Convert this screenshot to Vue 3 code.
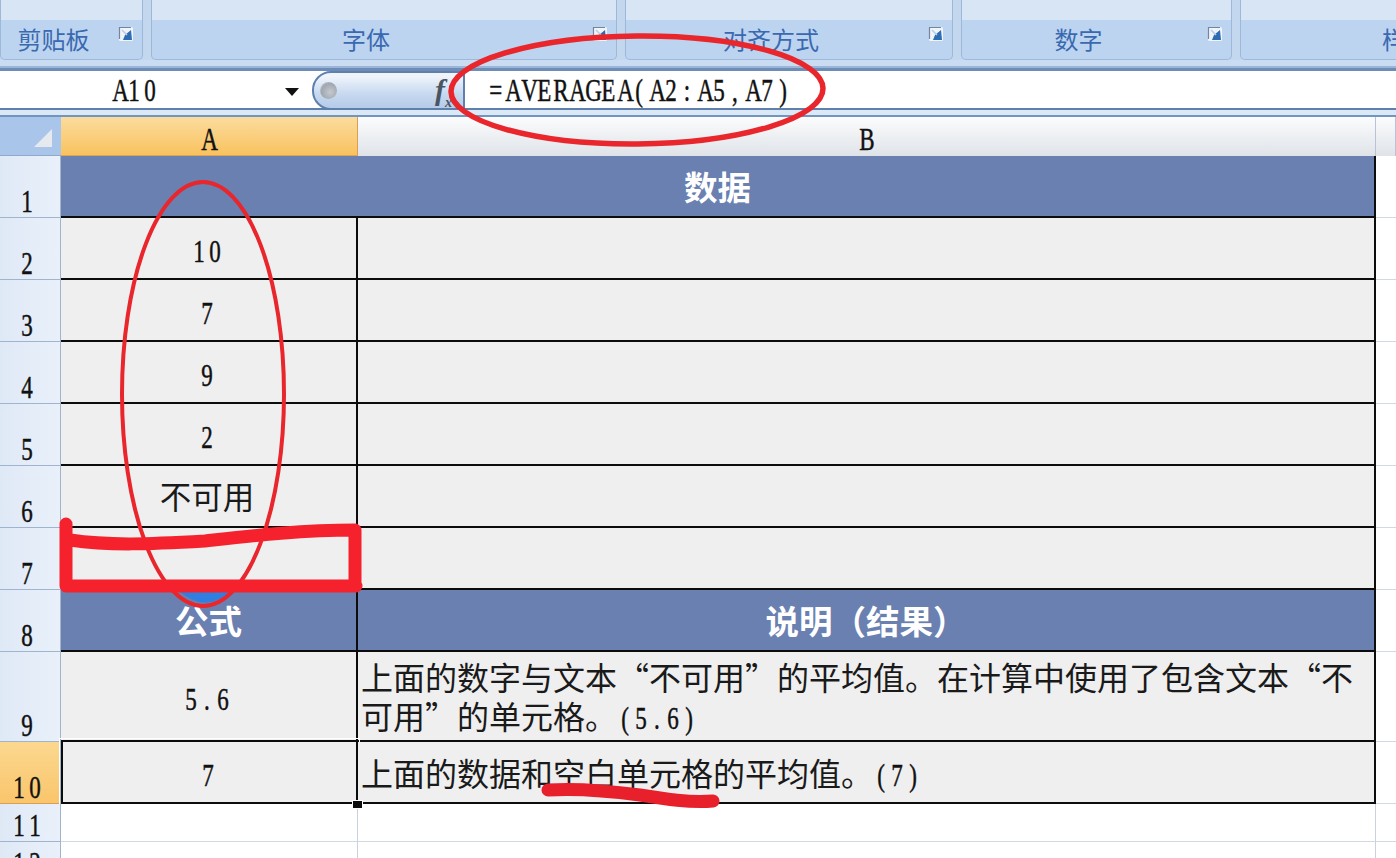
<script setup>
const groups = [
  { label: '剪贴板', width: 143, launcher: true },
  { label: '字体', width: 466, launcher: true },
  { label: '对齐方式', width: 328, launcher: true },
  { label: '数字', width: 271, launcher: true },
  { label: '样式', width: 332, launcher: false }
]

const rows = [
  { n: '1', cells: [{ t: '数据', cls: 'head', span: true }] },
  { n: '2', cells: [{ t: '10', cls: 'num' }, { t: '' }] },
  { n: '3', cells: [{ t: '7', cls: 'num' }, { t: '' }] },
  { n: '4', cells: [{ t: '9', cls: 'num' }, { t: '' }] },
  { n: '5', cells: [{ t: '2', cls: 'num' }, { t: '' }] },
  { n: '6', cells: [{ t: '不可用', cls: 'num' }, { t: '' }] },
  { n: '7', cells: [{ t: '', cls: 'num' }, { t: '' }] },
  { n: '8', cells: [{ t: '公式', cls: 'head' }, { t: '说明（结果）', cls: 'head' }] },
  { n: '9', cells: [{ t: '5.6', cls: 'num' }, { t: '上面的数字与文本“不可用”的平均值。在计算中使用了包含文本“不可用”的单元格。(5.6)', cls: 'desc' }] },
  { n: '10', active: true, cells: [{ t: '7', cls: 'num selected' }, { t: '上面的数据和空白单元格的平均值。(7)', cls: 'desc' }] },
  { n: '11', blank: true, cells: [{ t: '', cls: 'empty' }, { t: '', cls: 'empty' }] },
  { n: '12', blank: true, cells: [{ t: '', cls: 'empty' }, { t: '', cls: 'empty' }] }
]

function parts(text) {
  return text.split(/([\x00-\x7f]+)/).filter(Boolean).map((s) => ({
    s,
    latin: /^[\x00-\x7f]+$/.test(s)
  }))
}
</script>

<template>
  <div class="app">
    <div class="ribbon">
      <div
        v-for="g in groups"
        :key="g.label"
        class="group"
        :class="{ 'has-launcher': g.launcher }"
        :style="{ width: g.width + 'px' }"
      >
        <span class="group-label">{{ g.label }}</span>
        <svg v-if="g.launcher" class="launcher" viewBox="0 0 16 16" width="16" height="16">
          <rect x="1" y="1" width="14" height="14" rx="1.5" fill="#f1f5fa" />
          <path d="M1.5 13 V1.5 H13" fill="none" stroke="#74859c" stroke-width="1.2" />
          <path d="M7 9 L13 4 L14 14 H5 Z" fill="#2c6db3" />
          <path d="M4 4 L9 9" fill="none" stroke="#b9cde6" stroke-width="1.6" />
        </svg>
      </div>
    </div>

    <div class="formula-bar">
      <div class="name-box">
        <span class="mono"><span v-for="(ch, k) in 'A10'" :key="k" class="ch">{{ ch }}</span></span>
        <span class="caret"></span>
      </div>
      <div class="fx-pill">
        <span class="dot"></span>
        <span class="fx">f<sub>x</sub></span>
      </div>
      <div class="formula-input">
        <span class="mono"><span v-for="(ch, k) in '=AVERAGEA(A2:A5,A7)'" :key="k" class="ch">{{ ch }}</span></span>
      </div>
    </div>

    <div class="col-head">
      <div class="corner"><span class="corner-tri"></span></div>
      <div class="col col-a"><span class="mono"><span class="ch">A</span></span></div>
      <div class="col col-b"><span class="mono"><span class="ch">B</span></span></div>
      <div class="col col-c"></div>
    </div>

    <div class="sheet">
      <template v-for="r in rows" :key="r.n">
        <div class="row-no" :class="{ active: r.active }">
          <span class="mono"><span v-for="(ch, k) in r.n" :key="k" class="ch">{{ ch }}</span></span>
        </div>
        <div
          v-for="(c, i) in r.cells"
          :key="i"
          class="cell"
          :class="[c.cls, { span: c.span }]"
        >
          <template v-for="(p, j) in parts(c.t)" :key="j">
            <span v-if="p.latin" class="mono"><span v-for="(ch, k) in p.s" :key="k" class="ch">{{ ch }}</span></span>
            <template v-else>{{ p.s }}</template>
          </template>
        </div>
        <div class="cell-c"></div>
      </template>
    </div>

    <span class="fill-handle"></span>

    <svg class="marks" viewBox="0 0 1396 858" width="1396" height="858">
      <path d="M178 590 H233 Q205 615 178 590 Z" fill="#2f7ee0" />
      <ellipse cx="637" cy="90" rx="186" ry="54" transform="rotate(-0.5 637 90)" fill="none" stroke="#e8262c" stroke-width="5.5" />
      <ellipse cx="203" cy="394" rx="81" ry="212" fill="none" stroke="#e8262c" stroke-width="4" />
      <path
        d="M66 524 V586 H356 M70 540 C110 546 150 544 205 541 C250 536 300 530 355 530 V586"
        fill="none"
        stroke="#f5222d"
        stroke-width="13"
        stroke-linecap="round"
        stroke-linejoin="round"
      />
      <path
        d="M548 790 C580 788 610 791 640 795 C665 799 690 803 713 801"
        fill="none"
        stroke="#e8202c"
        stroke-width="13"
        stroke-linecap="round"
      />
    </svg>
  </div>
</template>

<style scoped>
.app {
  position: relative;
  width: 1396px;
  height: 858px;
  overflow: hidden;
  background: #fff;
  font-family: "Noto Sans CJK SC", "Liberation Sans", sans-serif;
  color: #1a1a1a;
}
.mono {
  display: inline-flex;
  align-items: center;
  height: 32px;
  line-height: 32px;
  font-family: "Liberation Serif", serif;
  font-size: 32px;
  font-weight: 400;
  color: #111;
}
.ch {
  display: inline-block;
  width: 16px;
  text-align: center;
  transform: scaleX(0.72);
  -webkit-text-stroke: 0.5px #111;
  white-space: pre;
}
.ribbon {
  display: flex;
  gap: 8px;
  height: 71px;
  box-sizing: border-box;
  padding-bottom: 11px;
  background: linear-gradient(#c3d8ef 0 60px, #c9dcf1 60px 66px, #9ab5d8 66px 68px, #6d8cb8 68px);
  overflow: hidden;
}
.group {
  position: relative;
  flex-shrink: 0;
  height: 60px;
  box-sizing: border-box;
  border: 1px solid #9db8d8;
  border-top: none;
  border-radius: 0 0 5px 5px;
  background: linear-gradient(#d7e5f4 0 20px, #bcd4ef 20px);
  display: flex;
  align-items: flex-end;
  justify-content: center;
}
.has-launcher {
  padding-right: 36px;
}
.group-label {
  font-size: 24px;
  line-height: 38px;
  padding-bottom: 1px;
  color: #3a69b0;
}
.launcher {
  position: absolute;
  right: 8px;
  top: 26px;
}
.formula-bar {
  display: flex;
  height: 39px;
  box-sizing: border-box;
  border-bottom: 2px solid #5f7fac;
  background: #fff;
}
.name-box {
  position: relative;
  width: 312px;
  display: flex;
  align-items: center;
  padding-left: 110px;
  box-sizing: border-box;
}
.caret {
  position: absolute;
  left: 285px;
  top: 17px;
  border: 7.5px solid transparent;
  border-top: 8px solid #111;
  border-bottom: none;
}
.fx-pill {
  position: relative;
  width: 153px;
  box-sizing: border-box;
  border: 2px solid #5f7fac;
  border-radius: 19px 0 0 19px;
  margin-bottom: -2px;
  background: linear-gradient(#eff4fb 10%, #c7d9ef 60%, #b5cbe9);
}
.dot {
  position: absolute;
  left: 6px;
  top: 9px;
  width: 17px;
  height: 17px;
  border-radius: 50%;
  background: radial-gradient(circle at 60% 60%, #c6c9ce, #a0a7b1 60%, #dfe3e9);
}
.fx {
  position: absolute;
  right: 11px;
  top: 1px;
  font-family: "Liberation Serif", serif;
  font-style: italic;
  font-weight: bold;
  font-size: 30px;
  line-height: 32px;
  color: #4a5562;
}
.fx sub {
  font-size: 14px;
  line-height: 0;
}
.formula-input {
  flex: 1;
  display: flex;
  align-items: center;
  padding-left: 22px;
}
.col-head {
  display: grid;
  grid-template-columns: 61px 297px 1018px 20px;
  height: 46px;
  box-sizing: border-box;
  padding-top: 7px;
  background: linear-gradient(#dbe8f6 0 5px, #7294c0 5px);
}
.corner {
  position: relative;
  background: #aac5ea;
  border-bottom: 1px solid #8ea9cb;
}
.corner-tri {
  position: absolute;
  right: 9px;
  bottom: 8px;
  border-left: 18px solid transparent;
  border-bottom: 18px solid #e6eaef;
}
.col {
  display: flex;
  align-items: center;
  justify-content: center;
  box-sizing: border-box;
  padding-top: 5px;
}
.col-a {
  background: linear-gradient(#fbdc9e, #f9c25f);
  border-right: 1px solid #d9a050;
  border-bottom: 1px solid #e0a550;
  padding-right: 4px;
}
.col-b,
.col-c {
  background: linear-gradient(#fbfcfd, #dfe3e8);
  border-right: 1px solid #b8c4d4;
}
.col-b {
  padding-right: 4px;
}
.sheet {
  display: grid;
  grid-template-columns: 61px 297px 1018px 20px;
  grid-template-rows: repeat(8, 62px) 90px 62px 38px 38px;
}
.row-no {
  display: flex;
  align-items: flex-end;
  justify-content: center;
  padding-right: 7px;
  box-sizing: border-box;
  background: linear-gradient(90deg, #dfe9f6, #e9f0fa);
  border-right: 1px solid #9fb4ce;
  border-bottom: 1px solid #9fb4ce;
}
.row-no.active {
  background: linear-gradient(#fbd88f, #fac56c);
  border-bottom-color: #d9a050;
}
.cell {
  display: flex;
  align-items: center;
  justify-content: center;
  box-sizing: border-box;
  background: #efeff0;
  border-bottom: 2px solid #0c0c0c;
  border-right: 2px solid #0c0c0c;
  font-size: 31.5px;
  line-height: 39px;
}
.cell.span {
  grid-column: span 2;
}
.cell.head {
  background: #6a80b0;
  color: #fff;
  font-weight: 700;
  font-size: 33.5px;
  padding-bottom: 2px;
}
.cell.num {
  padding-right: 3px;
  padding-bottom: 2px;
  font-weight: 400;
}
.cell.num .mono {
  margin-top: 7px;
}
.cell.desc {
  display: block;
  padding: 0 0 0 3px;
  font-size: 32px;
  word-break: break-all;
  align-content: center;
}
.cell.selected {
  margin-top: -2px;
  border: 2px solid #0c0c0c;
  outline: 1px solid #fff;
  outline-offset: 1px;
}
.cell.empty {
  background: #fff;
  border-bottom: 1px solid #d3d9e2;
  border-right: 1px solid #c9d2de;
}
.cell-c {
  background: #fff;
  border-bottom: 1px solid #d3d9e2;
}
.fill-handle {
  position: absolute;
  left: 352px;
  top: 800px;
  width: 9px;
  height: 7px;
  background: #0c0c0c;
  border: 1px solid #fff;
}
.marks {
  position: absolute;
  left: 0;
  top: 0;
  pointer-events: none;
}
</style>

<style>
html,
body {
  margin: 0;
  overflow: hidden;
}
</style>
